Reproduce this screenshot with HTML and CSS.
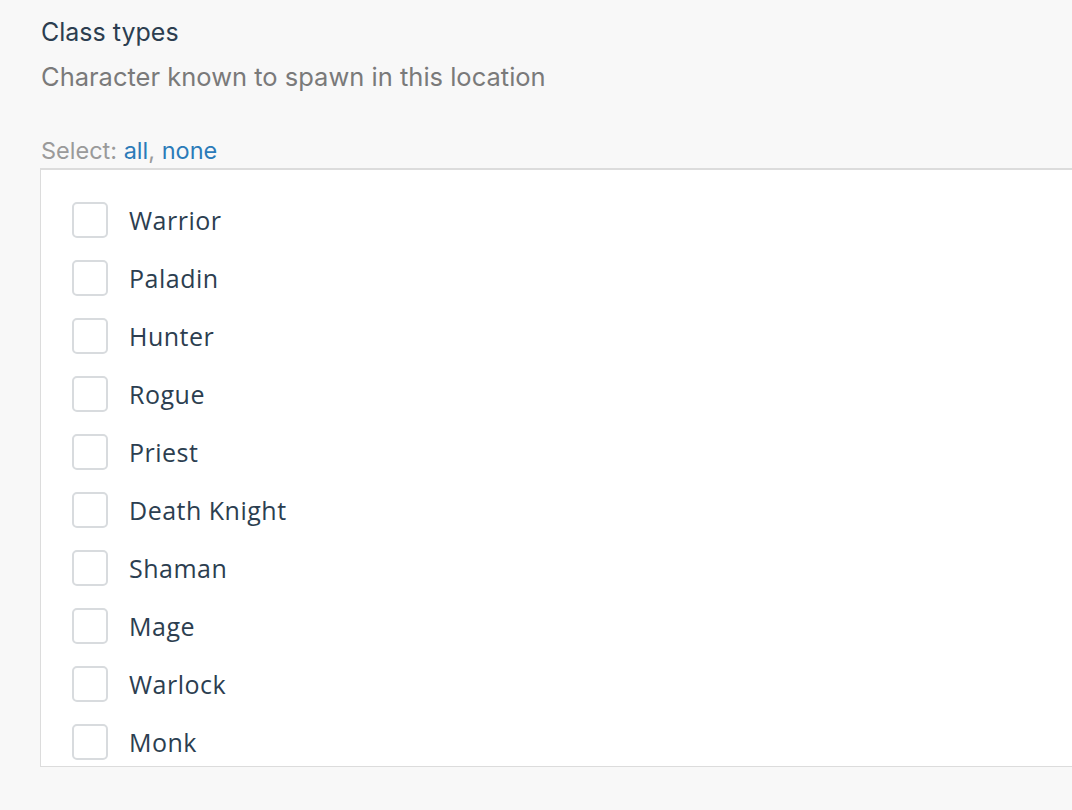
FILE: index.html
```html
<!DOCTYPE html>
<html lang="en">
  <head>
    <meta charset="UTF-8" />
    <title>Class types</title>
    <link rel="stylesheet" href="styles.css">
  </head>
  <body>
    <div class="field">
      <h2 class="field-title">Class types</h2>
      <p class="field-help">Character known to spawn in this location</p>

      <div class="select-links">
        Select: <a href="#">all</a>, <a href="#">none</a>
      </div>

      <div class="check-list">
        <label class="check-row"><span class="box"></span>Warrior</label>
        <label class="check-row"><span class="box"></span>Paladin</label>
        <label class="check-row"><span class="box"></span>Hunter</label>
        <label class="check-row"><span class="box"></span>Rogue</label>
        <label class="check-row"><span class="box"></span>Priest</label>
        <label class="check-row"><span class="box"></span>Death Knight</label>
        <label class="check-row"><span class="box"></span>Shaman</label>
        <label class="check-row"><span class="box"></span>Mage</label>
        <label class="check-row"><span class="box"></span>Warlock</label>
        <label class="check-row"><span class="box"></span>Monk</label>
      </div>
    </div>
  </body>
</html>
```

FILE: styles.css
```css
html,
body {
  margin: 0;
  overflow: hidden;
}
body {
  background-color: #f8f8f8;
  font-family: 'Open Sans', sans-serif;
  color: #2c3e50;
  height: 810px;
}
.field {
  padding: 16px 0 0 40px;
  width: 1100px;
}
.field-title {
  font-family: 'Inter', sans-serif;
  font-size: 25px;
  font-weight: 400;
  line-height: 32px;
  margin: 0 0 0 1px;
  color: #2c3e50;
}
.field-help {
  font-family: 'Inter', sans-serif;
  font-size: 25.5px;
  line-height: 32px;
  margin: 13px 0 0 1px;
  color: #7a7a7a;
}
.select-links {
  font-family: 'Inter', sans-serif;
  font-size: 23.5px;
  line-height: 28px;
  margin: 44px 0 3px 1px;
  color: #9a9a9a;
}
.select-links a {
  color: #2b7bb9;
  text-decoration: none;
}
.check-list {
  background-color: #fff;
  border: 1px solid #dcdcdc;
  border-top-width: 2px;
  height: 599px;
  overflow: hidden;
  padding: 21px 0 0 31px;
  box-sizing: border-box;
}
.check-row {
  display: flex;
  align-items: center;
  height: 58px;
  font-size: 25px;
  letter-spacing: 0.5px;
  color: #2c3e50;
}
.box {
  width: 32px;
  height: 32px;
  border: 2px solid #d8dbde;
  border-radius: 5px;
  margin-right: 21px;
  flex-shrink: 0;
}
```
